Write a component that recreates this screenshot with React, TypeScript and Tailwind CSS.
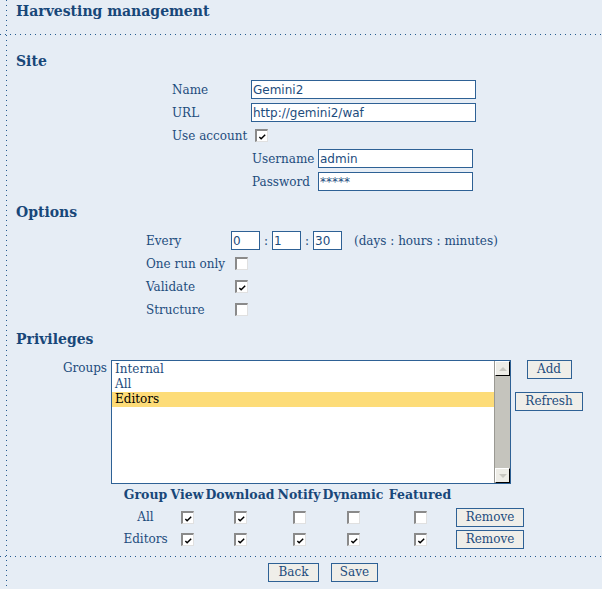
import React from "react"

const inputCls =
  "h-[19px] border border-[#2e6195] bg-white px-[1px] font-['DejaVu_Sans',sans-serif] text-[12px] leading-[17px] text-[#1d4c7d] outline-none"
const btnCls =
  "h-[19px] border border-[#2e6195] bg-[#efeee9] text-[12px] leading-[17px] text-[#1d4c7d] flex items-center justify-center"

function Check({ on }: { on?: boolean }) {
  return (
    <span className="inline-block w-[13px] h-[13px] border-t-2 border-l-2 border-t-[#8a8a8a] border-l-[#8a8a8a] border-r border-b border-r-[#e0e0e0] border-b-[#e0e0e0] bg-white relative">
      {on && (
        <svg viewBox="0 0 10 10" className="absolute left-[1px] top-[1px] w-[9px] h-[9px]">
          <path d="M1.5 5.5 L3.5 7.5 L8 3" fill="none" stroke="#000" strokeWidth="1.6" />
        </svg>
      )}
    </span>
  )
}

function Dots() {
  return <div className="-ml-[7px] h-px bg-[repeating-linear-gradient(to_right,#245a8f_0_1px,transparent_1px_5px)]" />
}

function Heading({ children, className = "" }: { children: React.ReactNode; className?: string }) {
  return <div className={`h-[20px] leading-[20px] pl-[9px] text-[14px] font-bold text-[#184779] ${className}`}>{children}</div>
}

export default function App() {
  const perms = [
    { name: "All", v: [true, true, false, false, false] },
    { name: "Editors", v: [true, true, true, true, true] },
  ]
  return (
    <div className="min-h-[589px] flex bg-[#e6edf5] text-[#1d4c7d] font-['DejaVu_Serif',serif] text-[12px]">
      <div className="w-[6px] shrink-0" />
      <div className="w-px shrink-0 bg-[repeating-linear-gradient(to_bottom,#245a8f_0_1px,transparent_1px_5px)]" />
      <div className="flex-1 flex flex-col">
        <div className="h-[34px] pl-[9px]">
          <div className="leading-[22px] text-[14px] font-bold text-[#184779]">Harvesting management</div>
        </div>
        <Dots />

        <Heading className="mt-[16px]">Site</Heading>
        <div className="mt-[7px] flex flex-col">
          <div className="h-[23px] flex items-center pl-[165px]">
            <span className="w-[79px]">Name</span>
            <input className={`${inputCls} w-[225px]`} defaultValue="Gemini2" />
          </div>
          <div className="h-[23px] flex items-center pl-[165px]">
            <span className="w-[79px]">URL</span>
            <input className={`${inputCls} w-[225px]`} defaultValue="http://gemini2/waf" />
          </div>
          <div className="h-[23px] flex items-center pl-[165px]">
            <span className="w-[79px]">Use account</span>
            <span className="ml-[4px] flex"><Check on /></span>
          </div>
          <div className="h-[23px] flex items-center pl-[245px]">
            <span className="w-[66px]">Username</span>
            <input className={`${inputCls} w-[155px]`} defaultValue="admin" />
          </div>
          <div className="h-[23px] flex items-center pl-[245px]">
            <span className="w-[66px]">Password</span>
            <input className={`${inputCls} w-[155px]`} defaultValue="*****" />
          </div>
        </div>

        <Heading className="mt-[9px]">Options</Heading>
        <div className="mt-[7px] flex flex-col">
          <div className="h-[23px] flex items-center pl-[139px]">
            <span className="w-[85px]">Every</span>
            <input className={`${inputCls} w-[29px]`} defaultValue="0" />
            <span className="w-[12px] text-center">:</span>
            <input className={`${inputCls} w-[29px]`} defaultValue="1" />
            <span className="w-[12px] text-center">:</span>
            <input className={`${inputCls} w-[29px]`} defaultValue="30" />
            <span className="ml-[12px]">(days : hours : minutes)</span>
          </div>
          {[
            ["One run only", false],
            ["Validate", true],
            ["Structure", false],
          ].map(([label, on]) => (
            <div key={label as string} className="h-[23px] flex items-center pl-[139px]">
              <span className="w-[85px]">{label}</span>
              <span className="ml-[4px] flex"><Check on={on as boolean} /></span>
            </div>
          ))}
        </div>

        <Heading className="mt-[8px]">Privileges</Heading>
        <div className="mt-[11px] flex">
          <span className="w-[100px] text-right leading-[15px] pt-[1px]">Groups</span>
          <div className="ml-[4px] w-[400px] h-[124px] border border-[#2e6195] bg-white flex">
            <div className="flex-1 pt-[1px] flex flex-col">
              <div className="h-[15px] leading-[15px] pl-[3px]">Internal</div>
              <div className="h-[15px] leading-[15px] pl-[3px]">All</div>
              <div className="h-[15px] leading-[15px] pl-[3px] bg-[#fddc78] text-black">Editors</div>
            </div>
            <div className="w-[16px] bg-[#c5c4bd] border-l border-[#9a9993] flex flex-col justify-between">
              <div className="h-[15px] bg-[#eeede7] border-r border-b border-r-black border-b-black border-t border-l border-t-white border-l-white flex items-center justify-center">
                <span className="w-0 h-0 border-l-[4px] border-r-[4px] border-b-[4px] border-l-transparent border-r-transparent border-b-[#c8c7c0]" />
              </div>
              <div className="h-[15px] bg-[#eeede7] border-r border-b border-r-black border-b-black border-t border-l border-t-white border-l-white flex items-center justify-center">
                <span className="w-0 h-0 border-l-[4px] border-r-[4px] border-t-[4px] border-l-transparent border-r-transparent border-t-[#c8c7c0]" />
              </div>
            </div>
          </div>
          <div className="ml-[4px] w-[68px] flex flex-col items-center gap-[13px]">
            <button className={`${btnCls} w-[45px]`}>Add</button>
            <button className={`${btnCls} w-[68px]`}>Refresh</button>
          </div>
        </div>

        <div className="ml-[114px] grid grid-cols-[49px_34px_72px_46px_62px_72px_68px]">
          {["Group", "View", "Download", "Notify", "Dynamic", "Featured"].map((h) => (
            <div key={h} className="h-[22px] flex items-center justify-center font-bold text-[12.5px] text-[#184779] whitespace-nowrap">
              {h}
            </div>
          ))}
          <div />
          {perms.map((p) => (
            <React.Fragment key={p.name}>
              <div className="h-[22px] flex items-center justify-center">{p.name}</div>
              {p.v.map((on, i) => (
                <div key={i} className="h-[22px] flex items-center justify-center">
                  <Check on={on} />
                </div>
              ))}
              <div className="h-[22px] flex items-center">
                <button className={`${btnCls} w-[68px]`}>Remove</button>
              </div>
            </React.Fragment>
          ))}
        </div>

        <div className="mt-[6px]">
          <Dots />
        </div>
        <div className="mt-[6px] pl-[261px] flex gap-[12px]">
          <button className={`${btnCls} w-[51px]`}>Back</button>
          <button className={`${btnCls} w-[47px]`}>Save</button>
        </div>
      </div>
    </div>
  )
}
